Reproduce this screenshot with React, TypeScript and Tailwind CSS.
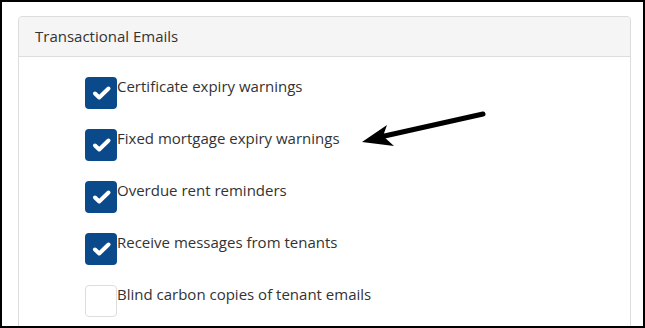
import React from "react";

const items = [
  { label: "Certificate expiry warnings", checked: true },
  { label: "Fixed mortgage expiry warnings", checked: true },
  { label: "Overdue rent reminders", checked: true },
  { label: "Receive messages from tenants", checked: true },
  { label: "Blind carbon copies of tenant emails", checked: false },
];

function Check() {
  return (
    <svg width="32" height="32" viewBox="0 0 32 32">
      <path d="M10 16.5 L14.2 20.5 L23.5 11.5" fill="none" stroke="#ffffff" strokeWidth="4" strokeLinecap="round" strokeLinejoin="round" />
    </svg>
  );
}

export default function App() {
  return (
    <div
      className="relative w-[645px] h-[328px] overflow-hidden border-2 border-black bg-white pl-4 pr-[12px] pt-[14px] text-[#333333]"
      style={{ fontFamily: '"Open Sans", "Noto Sans", sans-serif' }}
    >
      <div className="h-[400px] rounded-t-[4px] border border-[#dddddd] bg-white">
        <div className="h-[40px] rounded-t-[4px] border-b border-[#dddddd] bg-[#f5f5f5] px-[16px] flex items-center text-[15px]">
          Transactional Emails
        </div>
        <div className="pl-[66px] pt-[20px] flex flex-col gap-[20px]">
          {items.map((it) => (
            <div key={it.label} className="flex items-start">
              {it.checked ? (
                <div className="w-[32px] h-[32px] rounded-[4px] bg-[#0b4a8a]">
                  <Check />
                </div>
              ) : (
                <div className="w-[32px] h-[32px] rounded-[4px] border border-[#dddddd] bg-white" />
              )}
              <span className="text-[15px] leading-[20px] -mt-[1px]">{it.label}</span>
            </div>
          ))}
        </div>
      </div>
      <svg className="absolute left-0 top-0" width="645" height="328" viewBox="0 0 645 328">
        <line x1="481" y1="112" x2="378" y2="135" stroke="#000" strokeWidth="5" strokeLinecap="round" />
        <path d="M360 140 L385 123 L381 134 L392 144 Z" fill="#000" />
      </svg>
    </div>
  );
}
